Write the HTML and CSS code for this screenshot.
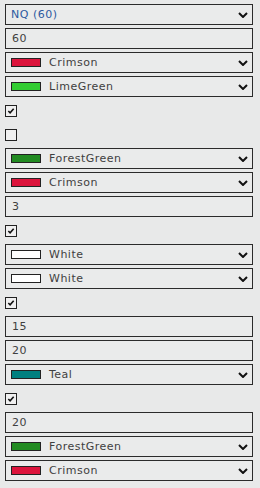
FILE: index.html
```html
<!DOCTYPE html>
<html lang="en">
<head>
    <meta charset="UTF-8">
    <title>Settings</title>
    <link rel="stylesheet" href="styles.css">
</head>
<body>
    <div class="panel">
        <div class="field select title"><span class="text">NQ (60)</span><svg class="chev" viewBox="0 0 10 6"><path d="M1 1 L5 5 L9 1"/></svg></div>
        <div class="field"><span class="text">60</span></div>
        <div class="field select"><span class="swatch crimson"></span><span class="text">Crimson</span><svg class="chev" viewBox="0 0 10 6"><path d="M1 1 L5 5 L9 1"/></svg></div>
        <div class="field select"><span class="swatch lime"></span><span class="text">LimeGreen</span><svg class="chev" viewBox="0 0 10 6"><path d="M1 1 L5 5 L9 1"/></svg></div>
        <div class="check-row"><span class="check on"><svg viewBox="0 0 9 9"><path d="M1.5 4.5 L3.5 6.5 L7.5 2"/></svg></span></div>
        <div class="check-row"><span class="check"></span></div>
        <div class="field select"><span class="swatch forest"></span><span class="text">ForestGreen</span><svg class="chev" viewBox="0 0 10 6"><path d="M1 1 L5 5 L9 1"/></svg></div>
        <div class="field select"><span class="swatch crimson"></span><span class="text">Crimson</span><svg class="chev" viewBox="0 0 10 6"><path d="M1 1 L5 5 L9 1"/></svg></div>
        <div class="field"><span class="text">3</span></div>
        <div class="check-row"><span class="check on"><svg viewBox="0 0 9 9"><path d="M1.5 4.5 L3.5 6.5 L7.5 2"/></svg></span></div>
        <div class="field select"><span class="swatch white"></span><span class="text">White</span><svg class="chev" viewBox="0 0 10 6"><path d="M1 1 L5 5 L9 1"/></svg></div>
        <div class="field select"><span class="swatch white"></span><span class="text">White</span><svg class="chev" viewBox="0 0 10 6"><path d="M1 1 L5 5 L9 1"/></svg></div>
        <div class="check-row"><span class="check on"><svg viewBox="0 0 9 9"><path d="M1.5 4.5 L3.5 6.5 L7.5 2"/></svg></span></div>
        <div class="field"><span class="text">15</span></div>
        <div class="field"><span class="text">20</span></div>
        <div class="field select"><span class="swatch teal"></span><span class="text">Teal</span><svg class="chev" viewBox="0 0 10 6"><path d="M1 1 L5 5 L9 1"/></svg></div>
        <div class="check-row"><span class="check on"><svg viewBox="0 0 9 9"><path d="M1.5 4.5 L3.5 6.5 L7.5 2"/></svg></span></div>
        <div class="field"><span class="text">20</span></div>
        <div class="field select"><span class="swatch forest"></span><span class="text">ForestGreen</span><svg class="chev" viewBox="0 0 10 6"><path d="M1 1 L5 5 L9 1"/></svg></div>
        <div class="field select"><span class="swatch crimson"></span><span class="text">Crimson</span><svg class="chev" viewBox="0 0 10 6"><path d="M1 1 L5 5 L9 1"/></svg></div>
    </div>
</body>
</html>
```

FILE: styles.css
```css
body {
    margin: 0;
    background-color: #e8e9e9;
    font-family: "DejaVu Sans", sans-serif;
    font-size: 11px;
    color: #3f3f3f;
}

.panel {
    display: flex;
    flex-direction: column;
    gap: 3px;
    width: 248px;
    padding: 4px 0 0 5px;
}

.field {
    display: flex;
    align-items: center;
    height: 21px;
    box-sizing: border-box;
    border: 1px solid #2b2b2b;
    background: #eaebeb;
    padding: 0 4px 0 6px;
}

.select {
    padding-left: 5px;
}

.title .text {
    color: #2d5aa0;
}

.text {
    flex: 1;
    letter-spacing: 0.5px;
}

.swatch {
    width: 30px;
    height: 9px;
    box-sizing: border-box;
    border: 1px solid #222;
    margin: 0 8px 0 0;
}

.crimson { background: #dc143c; }
.lime { background: #32cd32; }
.forest { background: #228b22; }
.teal { background: #008080; }
.white { background: #ffffff; }

.chev {
    width: 10px;
    height: 6px;
    fill: none;
    stroke: #111;
    stroke-width: 2;
}

.check-row {
    display: flex;
    align-items: center;
    height: 21px;
}

.check {
    width: 12px;
    height: 12px;
    box-sizing: border-box;
    border: 1px solid #222;
    background: #f0f0f0;
    display: flex;
    align-items: center;
    justify-content: center;
}

.check svg {
    width: 8px;
    height: 8px;
    fill: none;
    stroke: #111;
    stroke-width: 1.8;
}
```
